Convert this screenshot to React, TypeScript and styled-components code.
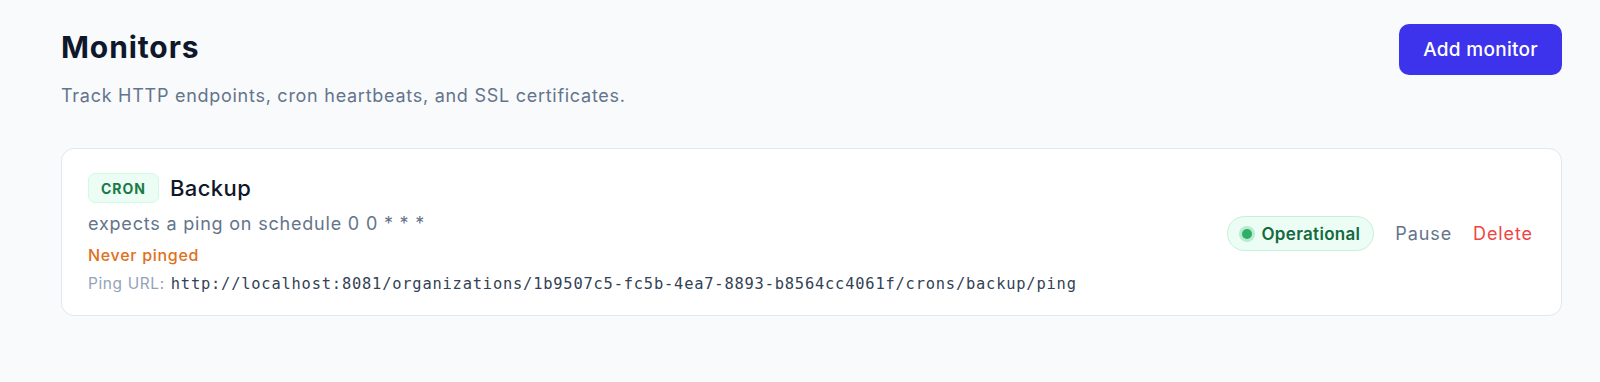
import React from "react";
import styled, { createGlobalStyle } from "styled-components";

const Global = createGlobalStyle`
  html, body { margin: 0; padding: 0; background: #f8fafc; }
  body { font-family: Inter, "Noto Sans", sans-serif; -webkit-font-smoothing: antialiased; }
  * { box-sizing: border-box; }
`;

const Page = styled.div`
  padding: 24px 38px 40px 61px;
  display: flex;
  flex-direction: column;
  gap: 39px;
`;

const Header = styled.header`
  display: flex;
  justify-content: space-between;
  align-items: flex-start;
`;

const TitleBlock = styled.div`
  display: flex;
  flex-direction: column;
  padding-top: 5px;
`;

const Title = styled.h1`
  margin: 0;
  font-size: 30px;
  line-height: 36px;
  font-weight: 700;
  color: #0f172a;
  letter-spacing: 0.9px;
`;

const Subtitle = styled.p`
  margin: 18px 0 0;
  font-size: 18px;
  line-height: 26px;
  color: #64748b;
  letter-spacing: 0.73px;
`;

const PrimaryButton = styled.button`
  height: 51px;
  padding: 0 24px;
  border: none;
  border-radius: 10px;
  background: #3d33ec;
  color: #fff;
  font-family: inherit;
  font-size: 19px;
  font-weight: 500;
  letter-spacing: 0.3px;
  cursor: pointer;
`;

const Card = styled.div`
  background: #fff;
  border: 1px solid #e2e8f0;
  border-radius: 13px;
  padding: 24px 28px 20px 26px;
  display: flex;
  align-items: center;
  justify-content: space-between;
`;

const Info = styled.div`
  display: flex;
  flex-direction: column;
`;

const NameRow = styled.div`
  display: flex;
  align-items: center;
  gap: 11px;
  height: 30px;
`;

const TypeBadge = styled.span`
  display: inline-flex;
  align-items: center;
  justify-content: center;
  height: 30px;
  width: 71px;
  border-radius: 7px;
  background: #ecfdf5;
  border: 1px solid #d1fae5;
  color: #1a7a45;
  font-size: 14px;
  font-weight: 700;
  letter-spacing: 1px;
`;

const Name = styled.span`
  font-size: 22px;
  font-weight: 500;
  color: #0f172a;
  letter-spacing: 0.4px;
`;

const Schedule = styled.div`
  margin-top: 8.5px;
  font-size: 18px;
  line-height: 24px;
  color: #64748b;
  letter-spacing: 0.8px;
`;

const Warning = styled.div`
  margin-top: 8px;
  font-size: 16px;
  line-height: 22px;
  font-weight: 500;
  color: #e07020;
  letter-spacing: 0.7px;
`;

const UrlRow = styled.div`
  margin-top: 7px;
  font-size: 15.4px;
  line-height: 22px;
  color: #94a3b8;
  letter-spacing: 0.65px;
  display: flex;
  align-items: baseline;
  gap: 6px;
`;

const Mono = styled.code`
  font-family: "DejaVu Sans Mono", "Liberation Mono", monospace;
  font-size: 15.4px;
  letter-spacing: 0.8px;
  color: #334155;
`;

const Actions = styled.div`
  display: flex;
  align-items: center;
  gap: 21px;
`;

const StatusPill = styled.span`
  display: inline-flex;
  align-items: center;
  gap: 10px;
  height: 35px;
  padding: 0 13px 0 14px;
  border-radius: 999px;
  background: #ecfdf5;
  border: 1px solid #c6f0d8;
  color: #15693f;
  font-size: 17px;
  font-weight: 600;
  letter-spacing: 0.3px;
`;

const Dot = styled.span`
  width: 10px;
  height: 10px;
  border-radius: 50%;
  background: #2fae67;
  box-shadow: 0 0 0 3px #b8ecce;
`;

const TextButton = styled.button<{ $danger?: boolean }>`
  border: none;
  background: none;
  padding: 0;
  font-family: inherit;
  font-size: 18px;
  letter-spacing: 0.9px;
  color: ${(p) => (p.$danger ? "#ef4444" : "#64748b")};
  cursor: pointer;
`;

export default function App() {
  return (
    <>
      <Global />
      <Page>
        <Header>
          <TitleBlock>
            <Title>Monitors</Title>
            <Subtitle>Track HTTP endpoints, cron heartbeats, and SSL certificates.</Subtitle>
          </TitleBlock>
          <PrimaryButton>Add monitor</PrimaryButton>
        </Header>
        <Card>
          <Info>
            <NameRow>
              <TypeBadge>CRON</TypeBadge>
              <Name>Backup</Name>
            </NameRow>
            <Schedule>expects a ping on schedule 0 0 * * *</Schedule>
            <Warning>Never pinged</Warning>
            <UrlRow>
              Ping URL:
              <Mono>http://localhost:8081/organizations/1b9507c5-fc5b-4ea7-8893-b8564cc4061f/crons/backup/ping</Mono>
            </UrlRow>
          </Info>
          <Actions>
            <StatusPill>
              <Dot />
              Operational
            </StatusPill>
            <TextButton>Pause</TextButton>
            <TextButton $danger>Delete</TextButton>
          </Actions>
        </Card>
      </Page>
    </>
  );
}
